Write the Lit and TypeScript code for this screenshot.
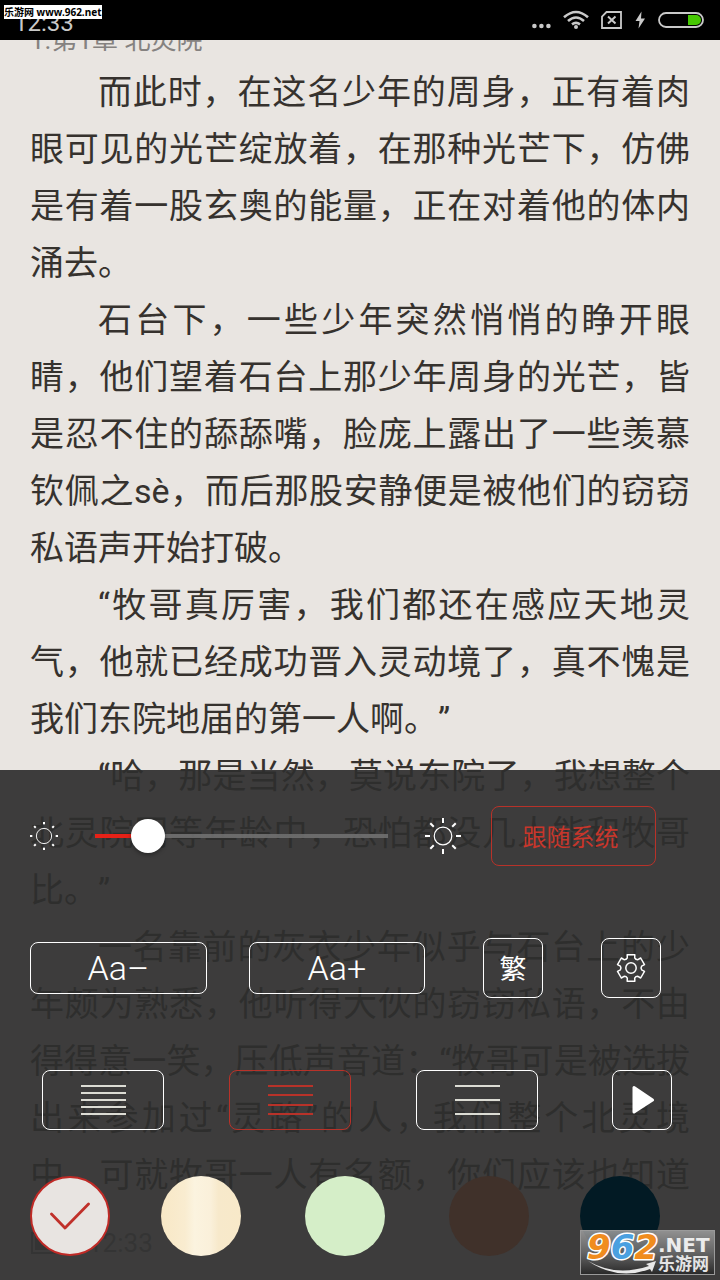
import { LitElement, html, svg, css } from "lit";
import { customElement, state } from "lit/decorators.js";

const paragraphs: string[] = [
  "而此时，在这名少年的周身，正有着肉眼可见的光芒绽放着，在那种光芒下，仿佛是有着一股玄奥的能量，正在对着他的体内涌去。",
  "石台下，一些少年突然悄悄的睁开眼睛，他们望着石台上那少年周身的光芒，皆是忍不住的舔舔嘴，脸庞上露出了一些羡慕钦佩之sè，而后那股安静便是被他们的窃窃私语声开始打破。",
  "“牧哥真厉害，我们都还在感应天地灵气，他就已经成功晋入灵动境了，真不愧是我们东院地届的第一人啊。”",
  "“哈，那是当然，莫说东院了，我想整个北灵院同等年龄中，恐怕都没几人能和牧哥比。”",
  "一名靠前的灰衣少年似乎与石台上的少年颇为熟悉，他听得大伙的窃窃私语，不由得得意一笑，压低声音道：“牧哥可是被选拔出来参加过“灵路”的人，我们整个北灵境中，可就牧哥一人有名额，你们应该也知道",
];

const themes = [
  { id: "paper", name: "米白" },
  { id: "parchment", name: "羊皮纸" },
  { id: "green", name: "护眼绿" },
  { id: "brown", name: "深棕" },
  { id: "night", name: "夜间" },
];

const spacings = [
  { id: "tight", name: "紧凑行距", lines: [2, 9, 16, 23, 30] },
  { id: "normal", name: "标准行距", lines: [2, 11, 21, 30] },
  { id: "loose", name: "宽松行距", lines: [2, 16, 30] },
];

/** Outline of a six-toothed cog centred on the origin. */
function cogPath(): string {
  const at = (r: number, deg: number) => {
    const a = ((deg - 90) * Math.PI) / 180;
    return `${(r * Math.cos(a)).toFixed(2)} ${(r * Math.sin(a)).toFixed(2)}`;
  };
  let d = "";
  for (let i = 0; i < 6; i++) {
    const c = i * 60;
    d += `${i ? "L" : "M"}${at(10.8, c - 20)}L${at(13.9, c - 16)}L${at(13.9, c + 16)}L${at(10.8, c + 20)}`;
    d += `Q${at(9.4, c + 30)} ${at(10.8, c + 40)}`;
  }
  return d + "Z";
}

@customElement("reader-status-bar")
export class ReaderStatusBar extends LitElement {
  static styles = css`
    :host {
      display: flex;
      align-items: center;
      justify-content: space-between;
      height: 40px;
      padding: 0 16px 0 14px;
      background: #000;
      color: #c9c9c9;
      font-family: Roboto, sans-serif;
    }
    .clock {
      font-size: 24px;
      line-height: 28px;
      padding-top: 6px;
    }
    .icons {
      display: flex;
      align-items: center;
      gap: 12px;
    }
    svg {
      display: block;
    }
  `;

  render() {
    return html`
      <span class="clock">12:33</span>
      <span class="icons">
        <svg width="20" height="20" viewBox="0 0 20 20" fill="#c9c9c9">
          <circle cx="3.4" cy="16" r="2.3" /><circle cx="10.4" cy="16" r="2.3" /><circle cx="17.4" cy="16" r="2.3" />
        </svg>
        <svg width="26" height="20" viewBox="0 0 26 20" fill="none" stroke="#c9c9c9" stroke-width="2.6">
          <path d="M1 7.2Q13-3.2 25 7.2M5 11Q13 4 21 11M9 14.4Q13 11.4 17 14.4" />
          <circle cx="13" cy="17" r="2" fill="#c9c9c9" stroke="none" />
        </svg>
        <svg width="21" height="18" viewBox="0 0 21 18" fill="none" stroke="#c9c9c9" stroke-width="1.8">
          <path d="M5.5 1H20V17H1V5.5Z" /><path d="M7 5.5L14.5 12.5M14.5 5.5L7 12.5" stroke-width="2" />
        </svg>
        <svg width="12" height="18" viewBox="0 0 12 18" fill="#c9c9c9">
          <path d="M7.5 0.5L1.5 10H5.5L4.5 17.5L11 7.5H7Z" />
        </svg>
        <svg width="46" height="16" viewBox="0 0 46 16">
          <rect x="1" y="1" width="44" height="14" rx="7" fill="none" stroke="#c9c9c9" stroke-width="1.8" />
          <path d="M30 3H38A5 5 0 0 1 38 13H30Z" fill="#46c803" />
        </svg>
      </span>
    `;
  }
}

@customElement("reader-page")
export class ReaderPage extends LitElement {
  static styles = css`
    :host {
      display: block;
      padding: 22px 30px 0;
      background: #e9e5e1;
      color: #36322e;
      font-family: Roboto, "Noto Sans CJK SC", sans-serif;
    }
    .chapter {
      margin: 0;
      font-size: 26px;
      font-weight: 400;
      line-height: 36px;
      color: #858280;
    }
    article {
      padding-top: 6px;
    }
    p {
      margin: 0;
      font-size: 34px;
      line-height: 57px;
      text-indent: 2em;
      text-align: justify;
      text-spacing-trim: space-all;
      text-autospace: no-autospace;
    }
    p:last-child {
      text-align-last: justify;
    }
    footer {
      display: flex;
      align-items: center;
      gap: 8px;
      padding-top: 24px;
      font-size: 26px;
      line-height: 30px;
      color: #858280;
    }
    svg {
      display: block;
    }
  `;

  render() {
    return html`
      <h1 class="chapter">1.第1章 北灵院</h1>
      <article>${paragraphs.map((text) => html`<p>${text}</p>`)}</article>
      <footer>
        <svg width="50" height="24" viewBox="0 0 50 24" fill="none" stroke="#858280" stroke-width="2">
          <path d="M2 2H44V22H2Z" /><path d="M47 8V16" /><path d="M6 6H24V18H6Z" fill="#858280" />
        </svg>
        <span>12:33</span>
      </footer>
    `;
  }
}

@customElement("reader-settings")
export class ReaderSettings extends LitElement {
  @state() brightness = 14;
  @state() theme = "paper";
  @state() spacing = "normal";

  static styles = css`
    :host {
      display: block;
      box-sizing: border-box;
      padding: 36px 0 24px;
      background: rgba(46, 46, 46, 0.92);
      color: #fff;
      font-family: Roboto, "Noto Sans CJK SC", sans-serif;
    }
    svg {
      display: block;
      flex: none;
    }
    button {
      display: flex;
      align-items: center;
      justify-content: center;
      box-sizing: border-box;
      height: 60px;
      margin: 0;
      padding: 0;
      border: 1px solid #fff;
      border-radius: 8px;
      background: none;
      color: inherit;
      font-family: inherit;
    }
    .row {
      display: grid;
      align-items: center;
    }
    .brightness {
      grid-template-columns: 28px 1fr 231px;
      column-gap: 37px;
      padding: 0 64px 0 30px;
    }
    .high {
      display: flex;
      align-items: center;
      gap: 30px;
    }
    .brightness .follow {
      flex: 1;
      padding: 0 6px 2px 0;
      border-color: #b83229;
      color: #c8362b;
      font-size: 24px;
    }
    .slider {
      appearance: none;
      width: 100%;
      height: 34px;
      margin: 0;
      background: linear-gradient(to right, #e62117 var(--fill), rgba(115, 115, 115, 0.85) var(--fill)) center / 100% 4px
        no-repeat;
    }
    .slider::-webkit-slider-thumb {
      appearance: none;
      width: 34px;
      height: 34px;
      border-radius: 50%;
      background: #fff;
      box-shadow: 0 2px 4px rgba(0, 0, 0, 0.35);
    }
    .type {
      grid-template-columns: 1fr 1fr 60px 60px;
      column-gap: 58px;
      padding: 72px 59px 0 30px;
    }
    .sizes {
      display: grid;
      grid-template-columns: 1fr 1fr;
      column-gap: 42px;
      grid-column: 1 / 3;
    }
    .size {
      height: 52px;
      font-size: 34px;
      font-weight: 300;
    }
    .script {
      padding-bottom: 2px;
      font-size: 27px;
    }
    .spacing {
      grid-template-columns: 1fr 60px;
      column-gap: 74px;
      padding: 72px 48px 0 42px;
    }
    .options {
      display: grid;
      grid-template-columns: repeat(3, 1fr);
      column-gap: 65px;
    }
    .option {
      color: #dcdcd4;
      border-color: #fff;
    }
    .option.on {
      color: #b83229;
      border-color: #b83229;
    }
    .themes {
      grid-template-columns: 131fr 144fr 144fr 131fr 80px;
      margin: 0;
      padding: 46px 60px 0 30px;
      border: 0;
    }
    .swatch {
      display: grid;
      width: 80px;
      height: 80px;
    }
    .swatch input,
    .swatch svg {
      grid-area: 1 / 1;
    }
    .swatch svg {
      place-self: center;
      pointer-events: none;
    }
    .swatch input {
      appearance: none;
      box-sizing: border-box;
      width: 80px;
      height: 80px;
      margin: 0;
      border-radius: 50%;
    }
    .swatch input:checked {
      border: 2px solid #c02a26;
    }
    .paper {
      background: #e8e4e1;
    }
    .parchment {
      background: linear-gradient(to right, #f8e8c6, #f9ecd0 30%, #fbf3df 42%, #faf0da 62%, #f7e9cb 72%, #f8e9c9);
    }
    .green {
      background: #d5eec8;
    }
    .brown {
      background: #40312a;
    }
    .night {
      background: #021a24;
    }
  `;

  private onBrightness(e: Event) {
    this.brightness = Number((e.target as HTMLInputElement).value);
  }

  private sun(size: number, r: number, from: number, width: number) {
    return html`<svg width=${size} height=${size} viewBox="-18 -18 36 36" fill="none" stroke="#fff">
      <circle r=${r} stroke-width="1.2" />
      ${[0, 45, 90, 135, 180, 225, 270, 315].map(
        (a) => svg`<path d="M0 ${-from}V-18" stroke-width=${width} transform="rotate(${a})" />`
      )}
    </svg>`;
  }

  render() {
    return html`
      <div class="row brightness">
        ${this.sun(28, 9.8, 15, 2.6)}
        <input
          class="slider"
          type="range"
          min="0"
          max="100"
          aria-label="亮度"
          .value=${String(this.brightness)}
          style="--fill: calc(17px + (100% - 34px) * ${this.brightness / 100})"
          @input=${this.onBrightness}
        />
        <div class="high">
          ${this.sun(36, 8.8, 13, 2)}
          <button class="follow" type="button">跟随系统</button>
        </div>
      </div>

      <div class="row type">
        <div class="sizes">
          <button class="size" type="button">Aa–</button>
          <button class="size" type="button">Aa+</button>
        </div>
        <button class="script" type="button">繁</button>
        <button type="button" aria-label="设置">
          <svg width="30" height="30" viewBox="-15 -15 30 30" fill="none" stroke="#fff" stroke-width="1.5" stroke-linejoin="round">
            <path d=${cogPath()} /><circle r="5.2" />
          </svg>
        </button>
      </div>

      <div class="row spacing">
        <div class="options">
          ${spacings.map(
            (s) => html`<button
              type="button"
              class="option ${s.id === this.spacing ? "on" : ""}"
              aria-label=${s.name}
              aria-pressed=${s.id === this.spacing}
              @click=${() => (this.spacing = s.id)}
            >
              <svg width="46" height="32" viewBox="0 0 46 32" fill="none" stroke="currentColor" stroke-width="2">
                ${s.lines.map((y) => svg`<path d="M1 ${y}H46" />`)}
              </svg>
            </button>`
          )}
        </div>
        <button type="button" aria-label="自动阅读">
          <svg width="24" height="30" viewBox="0 0 24 30" fill="#fff" stroke="#fff" stroke-width="3" stroke-linejoin="round">
            <path d="M4 2.5V27L22.5 15Z" />
          </svg>
        </button>
      </div>

      <fieldset class="row themes" aria-label="背景">
        ${themes.map(
          (t) => html`<label class="swatch">
            <input
              type="radio"
              name="theme"
              class=${t.id}
              aria-label=${t.name}
              .checked=${t.id === this.theme}
              @change=${() => (this.theme = t.id)}
            />
            ${t.id === this.theme
              ? html`<svg width="40" height="28" viewBox="0 0 40 28" fill="none" stroke="#c0302a" stroke-width="2.8" stroke-linecap="round" stroke-linejoin="round">
                  <path d="M1.5 12L15 26L38.5 2" />
                </svg>`
              : ""}
          </label>`
        )}
      </fieldset>
    `;
  }
}

@customElement("app-root")
export class AppRoot extends LitElement {
  static styles = css`
    :host {
      display: block;
      position: relative;
      height: 100vh;
      overflow: hidden;
      background: #e9e5e1;
    }
    .status {
      position: absolute;
      z-index: 1;
      top: 0;
      left: 0;
      right: 0;
    }
    .panel {
      position: absolute;
      left: 0;
      right: 0;
      bottom: 0;
    }
    .site {
      position: absolute;
      z-index: 2;
      top: 5px;
      left: 4px;
      padding: 0 1px 0 0;
      background: #fff;
      color: #000;
      font: 700 10px/14px "Noto Sans", "Noto Sans CJK SC", sans-serif;
      white-space: nowrap;
    }
    .badge {
      position: absolute;
      z-index: 2;
      right: 5px;
      bottom: 5px;
      display: block;
    }
    .digits {
      font: italic 700 34px "DejaVu Sans", sans-serif;
      stroke: #fff;
      stroke-width: 3px;
      paint-order: stroke;
      stroke-linejoin: round;
    }
    .net {
      font: 700 20px "DejaVu Sans", sans-serif;
    }
    .cn {
      font: 700 17px "Noto Sans CJK SC", sans-serif;
    }
  `;

  render() {
    return html`
      <reader-status-bar class="status"></reader-status-bar>
      <reader-page lang="zh-CN"></reader-page>
      <reader-settings class="panel" lang="zh-CN"></reader-settings>
      <span class="site">乐游网 www.962.net</span>
      <svg class="badge" width="135" height="45" viewBox="0 0 135 45" lang="zh-CN">
        <defs>
          <linearGradient id="plate" x1="0" y1="0" x2="0" y2="1">
            <stop offset="0" stop-color="#a0a0a0" stop-opacity="0.85" />
            <stop offset="0.5" stop-color="#6c6c6c" stop-opacity="0.85" />
            <stop offset="1" stop-color="#262626" stop-opacity="0.9" />
          </linearGradient>
        </defs>
        <rect x="0.5" y="0.5" width="134" height="44" fill="url(#plate)" stroke="#9a9a9a" />
        <path d="M8 31Q36 47 69 36L66 34L76 31L72 42L70 39Q38 51 8 31Z" fill="#e8e8e8" />
        <text class="digits" x="7" y="29"><tspan fill="#f08c1e">9</tspan><tspan fill="#4aa0e0">6</tspan><tspan fill="#f08c1e">2</tspan></text>
        <text class="net" x="78" y="22" fill="#ececec">.NET</text>
        <text class="cn" x="78" y="40" fill="#e4e4e4">乐游网</text>
      </svg>
    `;
  }
}
